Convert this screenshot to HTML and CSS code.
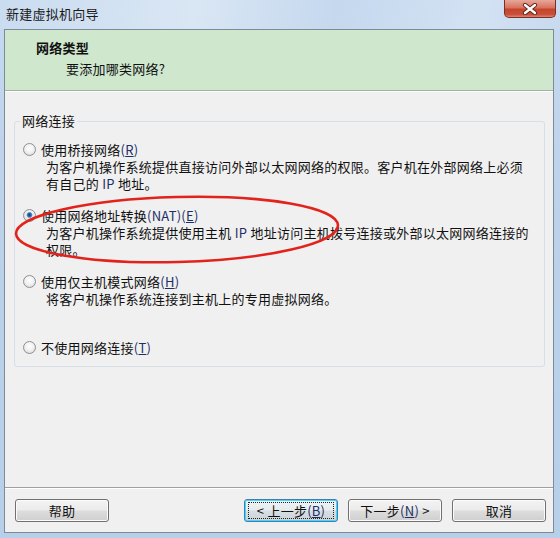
FILE: index.html
```html
<!DOCTYPE html>
<html lang="zh-CN">
<head>
    <meta charset="UTF-8">
    <meta name="viewport" content="width=device-width, initial-scale=1.0">
    <title>新建虚拟机向导</title>
    <link rel="stylesheet" href="styles.css">
</head>
<body>

    <div class="window">
        <div class="titlebar">
            <span class="title">新建虚拟机向导</span>
            <div class="close">
                <svg width="16" height="12" viewBox="0 0 16 12">
                    <path d="M3 2 L13 10 M13 2 L3 10" stroke="#5b2418" stroke-width="4.2" stroke-linecap="round"/>
                    <path d="M3 2 L13 10 M13 2 L3 10" stroke="#fff" stroke-width="2.4" stroke-linecap="round"/>
                </svg>
            </div>
        </div>

        <div class="client">
            <div class="header">
                <div class="header-title">网络类型</div>
                <div class="header-sub">要添加哪类网络?</div>
            </div>

            <div class="content">
                <fieldset class="group">
                    <legend>网络连接</legend>
                    <div class="options">
                        <div class="option">
                            <div class="option-label"><span class="radio"></span><span>使用桥接网络<span class="latin">(<u>R</u>)</span></span></div>
                            <div class="option-desc">为客户机操作系统提供直接访问外部以太网网络的权限。客户机在外部网络上必须<br>有自己的 <span class="latin">IP</span> 地址。</div>
                        </div>
                        <div class="option">
                            <div class="option-label"><span class="radio checked"></span><span>使用网络地址转换<span class="latin">(NAT)(<u>E</u>)</span></span></div>
                            <div class="option-desc">为客户机操作系统提供使用主机 <span class="latin">IP</span> 地址访问主机拨号连接或外部以太网网络连接的<br>权限。</div>
                        </div>
                        <div class="option">
                            <div class="option-label"><span class="radio"></span><span>使用仅主机模式网络<span class="latin">(<u>H</u>)</span></span></div>
                            <div class="option-desc">将客户机操作系统连接到主机上的专用虚拟网络。</div>
                        </div>
                        <div class="option last">
                            <div class="option-label"><span class="radio"></span><span>不使用网络连接<span class="latin">(<u>T</u>)</span></span></div>
                        </div>
                    </div>
                </fieldset>
            </div>

            <div class="footer">
                <button type="button" class="btn">帮助</button>
                <div class="nav">
                    <button type="button" class="btn default"><span class="focus">&lt; 上一步<span class="latin">(<u>B</u>)</span></span></button>
                    <button type="button" class="btn">下一步<span class="latin">(<u>N</u>)</span> &gt;</button>
                    <button type="button" class="btn">取消</button>
                </div>
            </div>
        </div>

        <svg class="mark" width="560" height="538" viewBox="0 0 560 538">
            <ellipse cx="177" cy="229.5" rx="161" ry="32.5" transform="rotate(-1.5 177 229.5)" fill="none" stroke="#e2231c" stroke-width="2.6"/>
        </svg>
    </div>

</body>
</html>
```

FILE: styles.css
```css
body {
    margin: 0;
    padding: 0;
    font-family: "Noto Sans CJK SC", "Microsoft YaHei", sans-serif;
    font-size: 13px;
    letter-spacing: 0.25px;
    color: #111;
    background-color: #b9d1ea;
}

.window {
    position: relative;
    width: 560px;
    height: 538px;
    display: flex;
    flex-direction: column;
    background: linear-gradient(to bottom, #c6d9ef 0%, #bcd2eb 40%, #b7cfe9 100%);
    overflow: hidden;
}

.titlebar {
    height: 29px;
    flex-shrink: 0;
    display: flex;
    justify-content: space-between;
    align-items: flex-start;
    background: linear-gradient(100deg, #cadcf0 0%, #d9e6f4 35%, #c5d8ee 60%, #d3e2f3 85%, #c8daef 100%);
}

.title {
    padding: 6px 0 0 6px;
    line-height: 16px;
    color: #1b1b1b;
}

.close {
    width: 52px;
    height: 18px;
    margin-right: 4px;
    box-sizing: border-box;
    border: 1px solid #7c2f22;
    border-top: none;
    border-radius: 0 0 5px 5px;
    background: linear-gradient(to bottom, #e7a89a 0%, #d8735f 45%, #c6442c 55%, #c9503a 85%, #e08672 100%);
    display: flex;
    justify-content: center;
    align-items: center;
}

.client {
    height: 504px;
    box-sizing: border-box;
    margin: 0 6px 0 4px;
    border: 1px solid #7d8b98;
    background-color: #f0f0f0;
    display: flex;
    flex-direction: column;
}

.header {
    height: 61px;
    box-sizing: border-box;
    flex-shrink: 0;
    padding: 10px 0 0 31px;
    background-color: #cfe7cd;
    border-bottom: 1px solid #a3b3a3;
    box-shadow: 0 1px 0 #ffffff;
}

.header-title {
    font-weight: bold;
    line-height: 16px;
}

.header-sub {
    margin-top: 5px;
    padding-left: 30px;
    line-height: 16px;
}

.content {
    flex: 1;
    padding-top: 22px;
}

.group {
    margin: 0 8px 0 9px;
    padding: 12px 8px 10px 8px;
    border: 1px solid #d5dfe5;
    border-radius: 3px;
}

.group legend {
    padding: 0 2px;
    margin-left: -3px;
    line-height: 16px;
}

.options {
    display: flex;
    flex-direction: column;
    gap: 15px;
}

.option {
    min-height: 51px;
}

.option.last {
    min-height: 0;
}

.option-label {
    display: flex;
    align-items: center;
    gap: 5px;
    line-height: 17px;
}

.option-desc {
    padding-left: 23px;
    line-height: 17px;
}

.latin {
    color: #1d2f66;
}

.radio {
    width: 13px;
    height: 13px;
    box-sizing: border-box;
    border-radius: 50%;
    border: 1px solid #8f9092;
    background: radial-gradient(circle at 50% 40%, #ffffff 0%, #f2f2f2 45%, #cfd0d1 100%);
    flex-shrink: 0;
}

.radio.checked {
    background:
        radial-gradient(circle at 50% 45%, #173c78 0%, #2f6bb0 22%, #7fb3e0 34%, rgba(255, 255, 255, 0) 40%),
        radial-gradient(circle at 50% 40%, #ffffff 0%, #eeeeee 45%, #c8c9ca 100%);
}

.footer {
    height: 45px;
    box-sizing: border-box;
    flex-shrink: 0;
    padding: 11px 7px 0 10px;
    border-top: 1px solid #a0a0a0;
    box-shadow: inset 0 1px 0 #ffffff;
    display: flex;
    justify-content: space-between;
    align-items: flex-start;
}

.nav {
    display: flex;
    gap: 10px;
}

.btn {
    width: 94px;
    height: 23px;
    padding: 0;
    font-family: inherit;
    font-size: 13px;
    letter-spacing: 0.25px;
    color: #111;
    border: 1px solid #707070;
    border-radius: 3px;
    background: linear-gradient(to bottom, #f3f3f3 0%, #ebebeb 48%, #dddddd 52%, #cfcfcf 100%);
    box-shadow: inset 0 0 0 1px #fbfbfb;
    line-height: 19px;
}

.btn.default {
    border-color: #3c7fb1;
    box-shadow: inset 0 0 0 1px #48d5f9;
    background: linear-gradient(to bottom, #f0f4f7 0%, #e6ebee 48%, #d8dfe3 52%, #ccd3d8 100%);
}

.btn .focus {
    display: inline-block;
    padding: 0 3px;
    outline: 1px dotted #222;
    outline-offset: 0;
    width: 78px;
    line-height: 15px;
}

.mark {
    position: absolute;
    left: 0;
    top: 0;
    pointer-events: none;
}
```
